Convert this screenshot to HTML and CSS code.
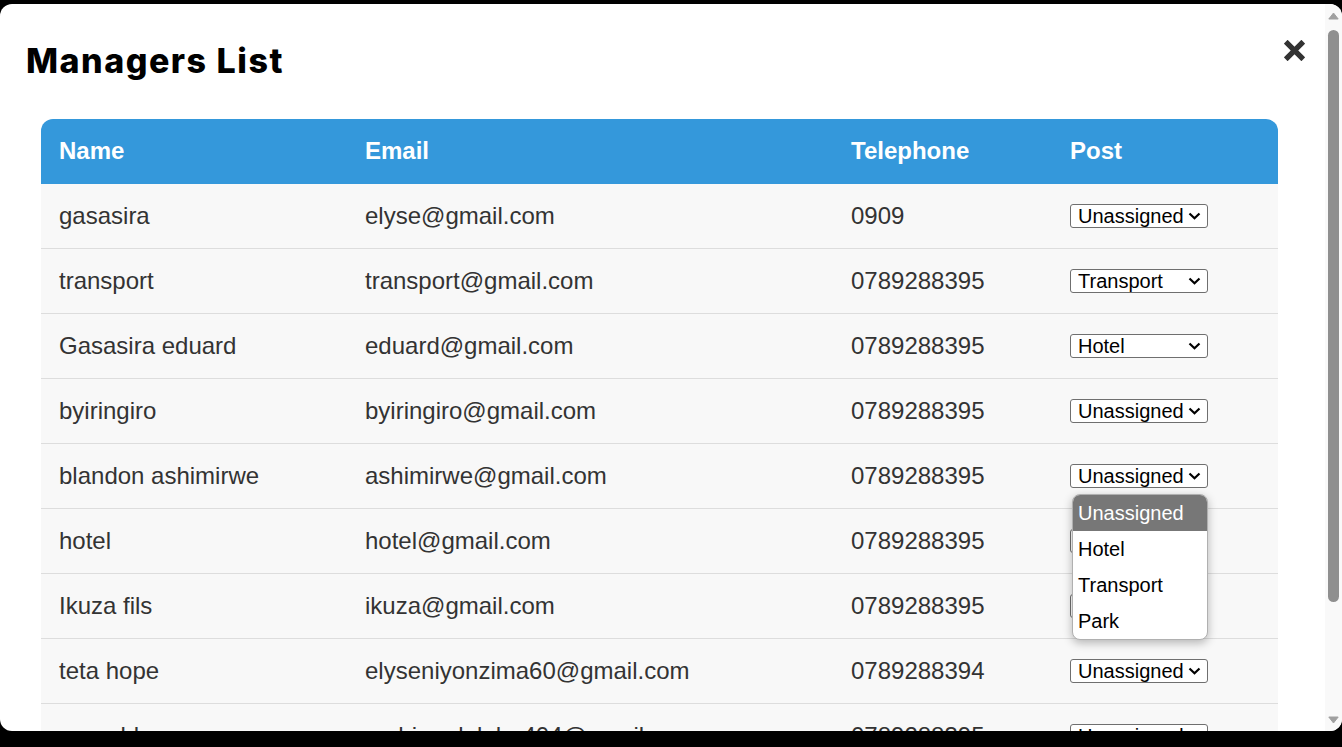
FILE: index.html
```html
<!DOCTYPE html>
<html lang="en">
<head>
<meta charset="utf-8">
<title>Managers List</title>
<link rel="stylesheet" href="styles.css">
</head>
<body>
<div class="modal">
  <div class="modal-content">
    <h2 class="title">Managers List</h2>
    <button class="close" aria-label="Close">
      <svg width="21" height="21" viewBox="0 0 21 21"><path d="M3.6 3.6 L17.4 17.4 M17.4 3.6 L3.6 17.4" stroke="#333" stroke-width="5.4" stroke-linecap="square" fill="none"/></svg>
    </button>
    <table class="managers">
      <colgroup>
        <col class="c-name"><col class="c-email"><col class="c-tel"><col class="c-post">
      </colgroup>
      <thead>
        <tr><th>Name</th><th>Email</th><th>Telephone</th><th>Post</th></tr>
      </thead>
      <tbody>
        <tr><td>gasasira</td><td>elyse@gmail.com</td><td>0909</td><td><div class="post-cell"><span class="select-wrap"><select class="post"><option selected>Unassigned</option><option>Hotel</option><option>Transport</option><option>Park</option></select><svg class="chev" width="13" height="8" viewBox="0 0 13 8"><path d="M1.5 1.5 L6.5 6.3 L11.5 1.5" stroke="#000" stroke-width="2.2" fill="none"/></svg></span></div></td></tr>
        <tr><td>transport</td><td>transport@gmail.com</td><td>0789288395</td><td><div class="post-cell"><span class="select-wrap"><select class="post"><option>Unassigned</option><option>Hotel</option><option selected>Transport</option><option>Park</option></select><svg class="chev" width="13" height="8" viewBox="0 0 13 8"><path d="M1.5 1.5 L6.5 6.3 L11.5 1.5" stroke="#000" stroke-width="2.2" fill="none"/></svg></span></div></td></tr>
        <tr><td>Gasasira eduard</td><td>eduard@gmail.com</td><td>0789288395</td><td><div class="post-cell"><span class="select-wrap"><select class="post"><option>Unassigned</option><option selected>Hotel</option><option>Transport</option><option>Park</option></select><svg class="chev" width="13" height="8" viewBox="0 0 13 8"><path d="M1.5 1.5 L6.5 6.3 L11.5 1.5" stroke="#000" stroke-width="2.2" fill="none"/></svg></span></div></td></tr>
        <tr><td>byiringiro</td><td>byiringiro@gmail.com</td><td>0789288395</td><td><div class="post-cell"><span class="select-wrap"><select class="post"><option selected>Unassigned</option><option>Hotel</option><option>Transport</option><option>Park</option></select><svg class="chev" width="13" height="8" viewBox="0 0 13 8"><path d="M1.5 1.5 L6.5 6.3 L11.5 1.5" stroke="#000" stroke-width="2.2" fill="none"/></svg></span></div></td></tr>
        <tr><td>blandon ashimirwe</td><td>ashimirwe@gmail.com</td><td>0789288395</td><td><div class="post-cell"><span class="select-wrap"><select class="post"><option selected>Unassigned</option><option>Hotel</option><option>Transport</option><option>Park</option></select><svg class="chev" width="13" height="8" viewBox="0 0 13 8"><path d="M1.5 1.5 L6.5 6.3 L11.5 1.5" stroke="#000" stroke-width="2.2" fill="none"/></svg>
          <div class="popup">
            <div class="opt active">Unassigned</div>
            <div class="opt">Hotel</div>
            <div class="opt">Transport</div>
            <div class="opt">Park</div>
          </div></span></div></td></tr>
        <tr><td>hotel</td><td>hotel@gmail.com</td><td>0789288395</td><td><div class="post-cell"><span class="select-wrap"><select class="post"><option>Unassigned</option><option selected>Hotel</option><option>Transport</option><option>Park</option></select><svg class="chev" width="13" height="8" viewBox="0 0 13 8"><path d="M1.5 1.5 L6.5 6.3 L11.5 1.5" stroke="#000" stroke-width="2.2" fill="none"/></svg></span></div></td></tr>
        <tr><td>Ikuza fils</td><td>ikuza@gmail.com</td><td>0789288395</td><td><div class="post-cell"><span class="select-wrap"><select class="post"><option>Unassigned</option><option>Hotel</option><option>Transport</option><option selected>Park</option></select><svg class="chev" width="13" height="8" viewBox="0 0 13 8"><path d="M1.5 1.5 L6.5 6.3 L11.5 1.5" stroke="#000" stroke-width="2.2" fill="none"/></svg></span></div></td></tr>
        <tr><td>teta hope</td><td>elyseniyonzima60@gmail.com</td><td>0789288394</td><td><div class="post-cell"><span class="select-wrap"><select class="post"><option selected>Unassigned</option><option>Hotel</option><option>Transport</option><option>Park</option></select><svg class="chev" width="13" height="8" viewBox="0 0 13 8"><path d="M1.5 1.5 L6.5 6.3 L11.5 1.5" stroke="#000" stroke-width="2.2" fill="none"/></svg></span></div></td></tr>
        <tr><td>ronaald</td><td>muhimadolphe404@gmail.com</td><td>0789288395</td><td><div class="post-cell"><span class="select-wrap"><select class="post"><option selected>Unassigned</option><option>Hotel</option><option>Transport</option><option>Park</option></select><svg class="chev" width="13" height="8" viewBox="0 0 13 8"><path d="M1.5 1.5 L6.5 6.3 L11.5 1.5" stroke="#000" stroke-width="2.2" fill="none"/></svg></span></div></td></tr>
        <tr><td>park</td><td>park@gmail.com</td><td>0789288395</td><td><div class="post-cell"><span class="select-wrap"><select class="post"><option selected>Unassigned</option><option>Hotel</option><option>Transport</option><option>Park</option></select><svg class="chev" width="13" height="8" viewBox="0 0 13 8"><path d="M1.5 1.5 L6.5 6.3 L11.5 1.5" stroke="#000" stroke-width="2.2" fill="none"/></svg></span></div></td></tr>
      </tbody>
    </table>
  </div>
  <div class="scrollbar" aria-hidden="true">
    <div class="sb-btn"><svg width="11" height="8" viewBox="0 0 11 8"><path d="M5.5 1 L10.2 7 L0.8 7 Z" fill="#a0a0a0" stroke="#a0a0a0" stroke-width="1" stroke-linejoin="round"/></svg></div>
    <div class="sb-track"><div class="sb-thumb"></div></div>
    <div class="sb-btn"><svg width="11" height="8" viewBox="0 0 11 8"><path d="M0.8 1 L10.2 1 L5.5 7 Z" fill="#a0a0a0" stroke="#a0a0a0" stroke-width="1" stroke-linejoin="round"/></svg></div>
  </div>
</div>
</body>
</html>
```

FILE: styles.css
```css
html, body {
  margin: 0;
  padding: 0;
}
body {
  background: #000;
  padding-top: 4px;
  height: 747px;
  box-sizing: border-box;
  overflow: hidden;
}
.modal {
  display: flex;
  height: 727px;
  background: #fff;
  border-radius: 12px;
  overflow: hidden;
}
.modal-content {
  flex: 1;
  min-width: 0;
  position: relative;
  overflow: hidden;
  padding: 37px 0 48px 26px;
}
.scrollbar {
  flex: none;
  width: 17px;
  display: flex;
  flex-direction: column;
  background: #f9f9f9;
}
.sb-btn {
  height: 22px;
  display: flex;
  align-items: center;
  justify-content: center;
}
.sb-btn:first-child {
  align-items: flex-start;
  padding-top: 8px;
  height: 14px;
}
.sb-btn svg {
  display: block;
}
.sb-track {
  flex: 1;
  padding-top: 4px;
  display: flex;
  justify-content: center;
}
.sb-thumb {
  width: 11px;
  height: 572px;
  border-radius: 6px;
  background: #8f8f8f;
}
.title {
  margin: 0 0 38px;
  font-family: Inter, "Open Sans", sans-serif;
  font-weight: 800;
  font-size: 34px;
  line-height: 40px;
  letter-spacing: 1.5px;
  color: #000;
}
.close {
  position: absolute;
  top: 36px;
  right: 20px;
  width: 21px;
  height: 21px;
  padding: 0;
  border: 0;
  background: transparent;
  cursor: pointer;
}
.close svg {
  display: block;
}
.managers {
  margin-left: 15px;
  width: 1237px;
  table-layout: fixed;
  border-collapse: separate;
  border-spacing: 0;
  font-family: "Liberation Sans", Arial, sans-serif;
  font-size: 24px;
  line-height: 28px;
}
.c-name { width: 306px; }
.c-email { width: 486px; }
.c-tel { width: 219px; }
.c-post { width: 226px; }
.managers th {
  background: #3498db;
  color: #fff;
  font-weight: 700;
  text-align: left;
  padding: 18px 18px 19px;
}
.managers th:first-child { border-top-left-radius: 12px; }
.managers th:last-child { border-top-right-radius: 12px; }
.managers td {
  background: #f8f8f8;
  color: #333;
  padding: 18px 18px;
  border-bottom: 1px solid #dddddd;
  white-space: nowrap;
  vertical-align: top;
}
.post-cell {
  height: 28px;
  display: flex;
  align-items: flex-start;
}
.select-wrap {
  position: relative;
  display: block;
  margin-top: 2px;
}
.post {
  display: block;
  width: 138px;
  height: 24px;
  margin: 0;
  padding: 0 0 0 7px;
  -webkit-appearance: none;
  appearance: none;
  background: #fff;
  border: 1px solid #6f6f6f;
  border-radius: 3px;
  font-family: "Liberation Sans", Arial, sans-serif;
  font-size: 20px;
  line-height: 22px;
  color: #000;
}
.chev {
  position: absolute;
  right: 7px;
  top: 8px;
  pointer-events: none;
}
.popup {
  position: absolute;
  top: 30px;
  left: 2px;
  width: 134px;
  background: #fff;
  border: 1px solid #b0b0b0;
  border-radius: 8px;
  box-shadow: 0 3px 10px rgba(0, 0, 0, 0.28);
  overflow: hidden;
  z-index: 5;
  font-family: "Liberation Sans", Arial, sans-serif;
  font-size: 20px;
  color: #000;
}
.opt {
  height: 36px;
  line-height: 36px;
  padding-left: 5px;
}
.opt.active {
  background: #777;
  color: #fff;
}
```
